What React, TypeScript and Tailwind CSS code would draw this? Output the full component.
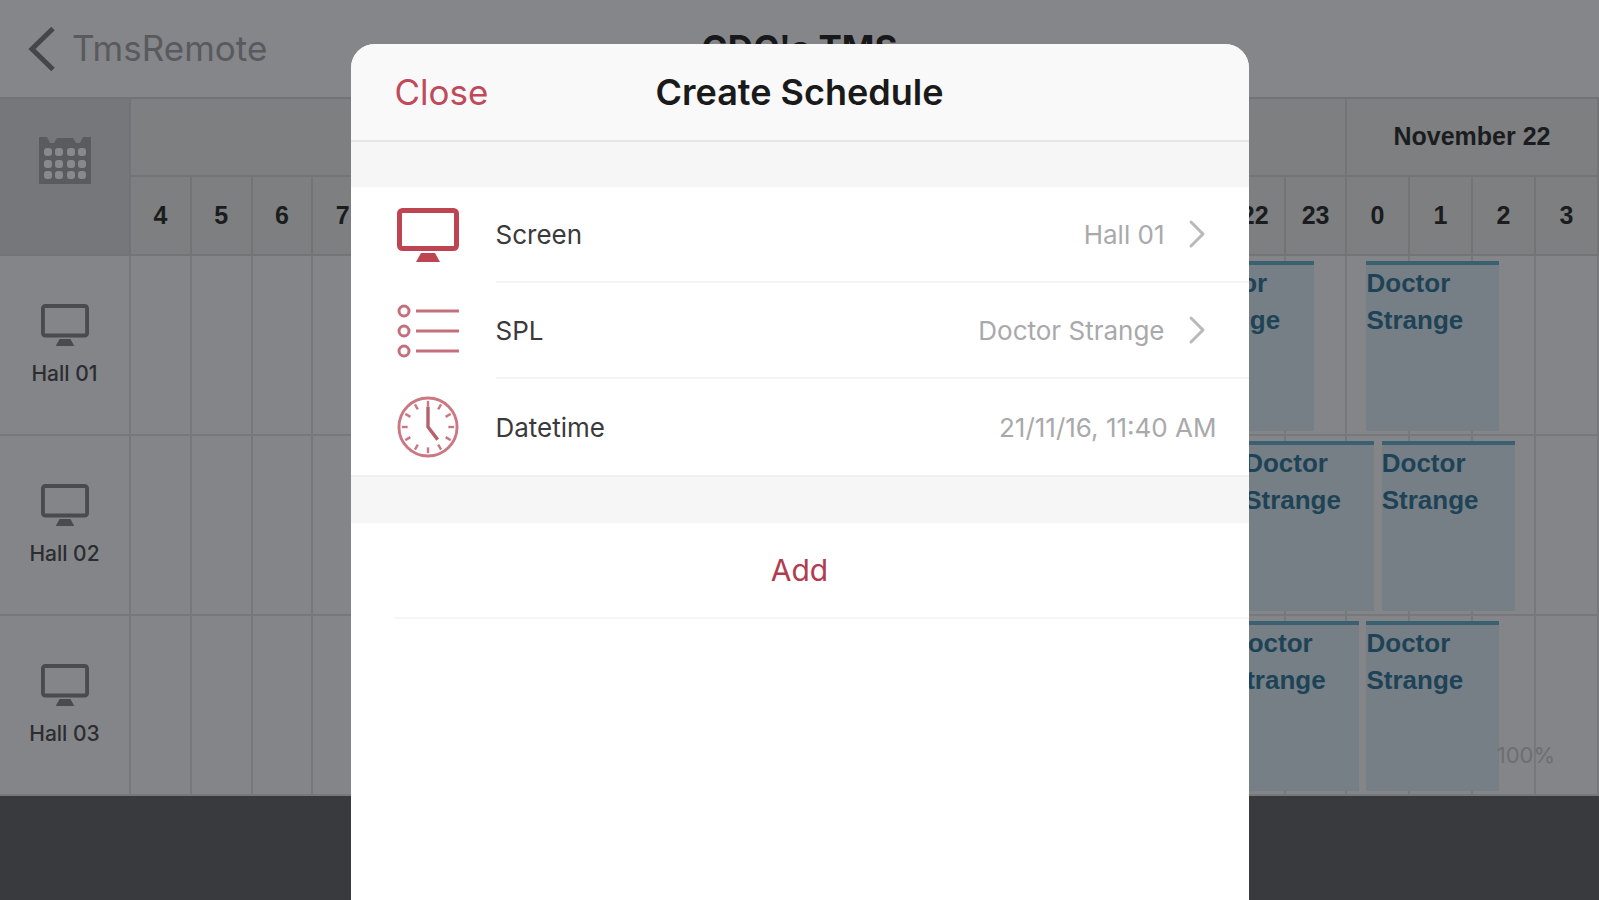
import type { ReactNode } from "react";
import { ChevronRight } from "lucide-react";

const FIRST_DAY_HOURS = Array.from({ length: 20 }, (_, i) => i + 4);
const SECOND_DAY_HOURS = [0, 1, 2, 3];

interface Show {
  title: string;
  day: number;
  hour: number;
  offset: number; // fraction of the starting hour
  length: number; // in hours
}

interface Hall {
  name: string;
  shows: Show[];
}

const HALLS: Hall[] = [
  {
    name: "Hall 01",
    shows: [
      { title: "Doctor Strange", day: 21, hour: 21, offset: 0.32, length: 2.22 },
      { title: "Doctor Strange", day: 22, hour: 0, offset: 0.32, length: 2.18 },
    ],
  },
  {
    name: "Hall 02",
    shows: [
      { title: "Doctor Strange", day: 21, hour: 22, offset: 0.32, length: 2.2 },
      { title: "Doctor Strange", day: 22, hour: 0, offset: 0.57, length: 2.18 },
    ],
  },
  {
    name: "Hall 03",
    shows: [
      { title: "Doctor Strange", day: 21, hour: 22, offset: 0.06, length: 2.22 },
      { title: "Doctor Strange", day: 22, hour: 0, offset: 0.32, length: 2.18 },
    ],
  },
];

function MonitorIcon({ className }: { className?: string }) {
  return (
    <svg viewBox="0 0 62 54" fill="none" className={className} aria-hidden="true">
      <rect x="2.5" y="2.5" width="57" height="38" rx="3" stroke="currentColor" strokeWidth="5" />
      <path d="M24 45h14l5 9H19z" fill="currentColor" />
    </svg>
  );
}

function BackIcon() {
  return (
    <svg viewBox="0 0 28 46" fill="none" className="w-7 h-[46px] text-[#45464a]" aria-hidden="true">
      <path d="M25 2.5 4 23l21 20.5" stroke="currentColor" strokeWidth="5" />
    </svg>
  );
}

function CalendarIcon() {
  return (
    <svg viewBox="0 0 52 47" className="w-[52px] h-[47px] text-[#5a5b5f]" aria-hidden="true">
      <path d="M0 0h8l3 6h4l3-5h16l3 5h4l3-6h8v47H0z" fill="currentColor" />
      <g fill="#88898d">
        {[11, 23, 34].map((y) =>
          [5, 16, 28, 39].map((x) => (
            <rect key={`${x}-${y}`} x={x} y={y} width="8" height="8" rx="3" />
          ))
        )}
      </g>
    </svg>
  );
}

function ListIcon() {
  return (
    <svg viewBox="0 0 62 54" fill="none" className="w-[62px] h-[54px]" aria-hidden="true">
      {[7, 27, 47].map((y) => (
        <g key={y} stroke="#c4707c" strokeWidth="3">
          <circle cx="7" cy={y} r="5" />
          <path d={`M19 ${y}h43`} />
        </g>
      ))}
    </svg>
  );
}

function ClockIcon() {
  return (
    <svg viewBox="0 0 64 64" fill="none" className="w-[62px] h-[62px]" aria-hidden="true">
      <circle cx="32" cy="32" r="30" stroke="#cc7882" strokeWidth="3" />
      {Array.from({ length: 12 }, (_, i) => (
        <path
          key={i}
          d="M32 5v6"
          stroke="#cc7882"
          strokeWidth="2.5"
          transform={`rotate(${i * 30} 32 32)`}
        />
      ))}
      <path d="M32 11v21l10 13" stroke="#b5606c" strokeWidth="3.5" />
    </svg>
  );
}

function HourCell({ shows }: { shows: Show[] }) {
  return (
    <td className="relative h-[180px] p-0 border-r-2 border-b-2 border-[#77787b]">
      {shows.map((show) => (
        <div
          key={show.offset}
          className="absolute top-[5px] z-10 h-[170px] bg-[#767f86] border-t-4 border-[#3b6070] text-[26px] leading-[37px] font-bold text-[#1f4356]"
          style={{ left: `${show.offset * 100}%`, width: `${show.length * 100}%` }}
        >
          {show.title}
        </div>
      ))}
    </td>
  );
}

function Timeline() {
  return (
    <table className="w-full table-fixed border-separate border-spacing-0 bg-[#848588] font-['Liberation_Sans',sans-serif] text-[25px] text-[#1b1c1e]">
      <colgroup>
        <col className="w-[131px]" />
        {FIRST_DAY_HOURS.map((hour) => (
          <col key={hour} />
        ))}
        {SECOND_DAY_HOURS.map((hour) => (
          <col key={hour} className="w-[63px]" />
        ))}
      </colgroup>
      <thead>
        <tr className="bg-[#7d7f80]">
          <th rowSpan={2} className="bg-[#76777b] border-r-2 border-b-2 border-[#727377] p-0 pt-[38px] align-top">
            <div className="flex justify-center">
              <CalendarIcon />
            </div>
          </th>
          <th colSpan={20} className="h-[78px] p-0 border-r-2 border-b-2 border-[#737477]">
            November 21
          </th>
          <th colSpan={4} className="h-[78px] p-0 border-r-2 border-b-2 border-[#737477]">
            November 22
          </th>
        </tr>
        <tr className="bg-[#7d7f80]">
          {[...FIRST_DAY_HOURS, ...SECOND_DAY_HOURS].map((hour) => (
            <th key={hour} className="h-[79px] p-0 border-r-2 border-b-2 border-[#737477]">
              {hour}
            </th>
          ))}
        </tr>
      </thead>
      <tbody>
        {HALLS.map((hall) => (
          <tr key={hall.name}>
            <th className="h-[180px] p-0 pt-[48px] align-top font-normal border-r-2 border-b-2 border-[#77787b]">
              <div className="flex flex-col items-center gap-3">
                <MonitorIcon className="w-12 h-[42px] text-[#4a4b4f]" />
                <span className="font-['Inter',sans-serif] text-[21px] leading-8 font-medium text-[#2c2d30]">
                  {hall.name}
                </span>
              </div>
            </th>
            {FIRST_DAY_HOURS.map((hour) => (
              <HourCell key={hour} shows={hall.shows.filter((s) => s.day === 21 && s.hour === hour)} />
            ))}
            {SECOND_DAY_HOURS.map((hour) => (
              <HourCell key={hour} shows={hall.shows.filter((s) => s.day === 22 && s.hour === hour)} />
            ))}
          </tr>
        ))}
      </tbody>
    </table>
  );
}

interface FormRowProps {
  icon: ReactNode;
  label: string;
  value: string;
  chevron?: boolean;
  last?: boolean;
}

function FormRow({ icon, label, value, chevron, last }: FormRowProps) {
  return (
    <button type="button" className="flex w-full h-24 items-center pl-[46px] text-left">
      <span className="flex w-[99px] shrink-0">{icon}</span>
      <span
        className={
          last
            ? "flex h-full flex-1 items-center"
            : "flex h-full flex-1 items-center border-b-2 border-[#f5f5f5]"
        }
      >
        <span className="flex-1 text-[#3a3a3c]">{label}</span>
        <span className={chevron ? "text-[#a9a9ac]" : "pr-8 text-[#a9a9ac]"}>{value}</span>
        {chevron && (
          <ChevronRight className="ml-2 mr-7 size-12 text-[#b9b9bd]" strokeWidth={1.5} />
        )}
      </span>
    </button>
  );
}

function CreateScheduleDialog() {
  return (
    <div
      role="dialog"
      aria-label="Create Schedule"
      className="w-full max-w-[898px] h-full overflow-hidden rounded-t-3xl bg-white text-[26px]"
    >
      <header className="grid h-[98px] grid-cols-[1fr_auto_1fr] items-center border-b-2 border-[#e6e6e7] bg-[#f9f9f9] px-11">
        <button type="button" className="justify-self-start text-[35px] text-[#c04a59]">
          Close
        </button>
        <h2 className="text-[36px] font-semibold text-[#1a1a1b]">Create Schedule</h2>
      </header>
      <div className="h-[45px] bg-[#f6f6f6]" />
      <FormRow
        icon={<MonitorIcon className="w-[62px] h-[54px] text-[#bd4450]" />}
        label="Screen"
        value="Hall 01"
        chevron
      />
      <FormRow icon={<ListIcon />} label="SPL" value="Doctor Strange" chevron />
      <FormRow icon={<ClockIcon />} label="Datetime" value="21/11/16, 11:40 AM" last />
      <div className="h-12 border-t-2 border-[#f0f0f0] bg-[#f6f6f6]" />
      <div className="ml-11 h-24 border-b-2 border-[#f6f6f6]">
        <button type="button" className="block h-full w-full pr-11 text-[30px] text-[#b23c4e]">
          Add
        </button>
      </div>
    </div>
  );
}

export default function App() {
  return (
    <div className="relative min-h-screen overflow-hidden bg-[#393a3e] font-['Inter',sans-serif]">
      <header className="grid h-[99px] grid-cols-[1fr_auto_1fr] items-center border-b-2 border-[#727376] bg-[#858689] px-7 text-[35px]">
        <button type="button" className="flex items-center gap-4 text-[#595a5e]">
          <BackIcon />
          TmsRemote
        </button>
        <h1 className="font-bold text-[#18181a]">GDC's TMS</h1>
      </header>
      <main className="relative">
        <Timeline />
        <span className="absolute right-11 bottom-6 z-10 text-[22px] text-[#6d6e71]">100%</span>
      </main>
      <div className="absolute inset-x-0 top-[44px] bottom-0 z-20 flex justify-center">
        <CreateScheduleDialog />
      </div>
    </div>
  );
}
